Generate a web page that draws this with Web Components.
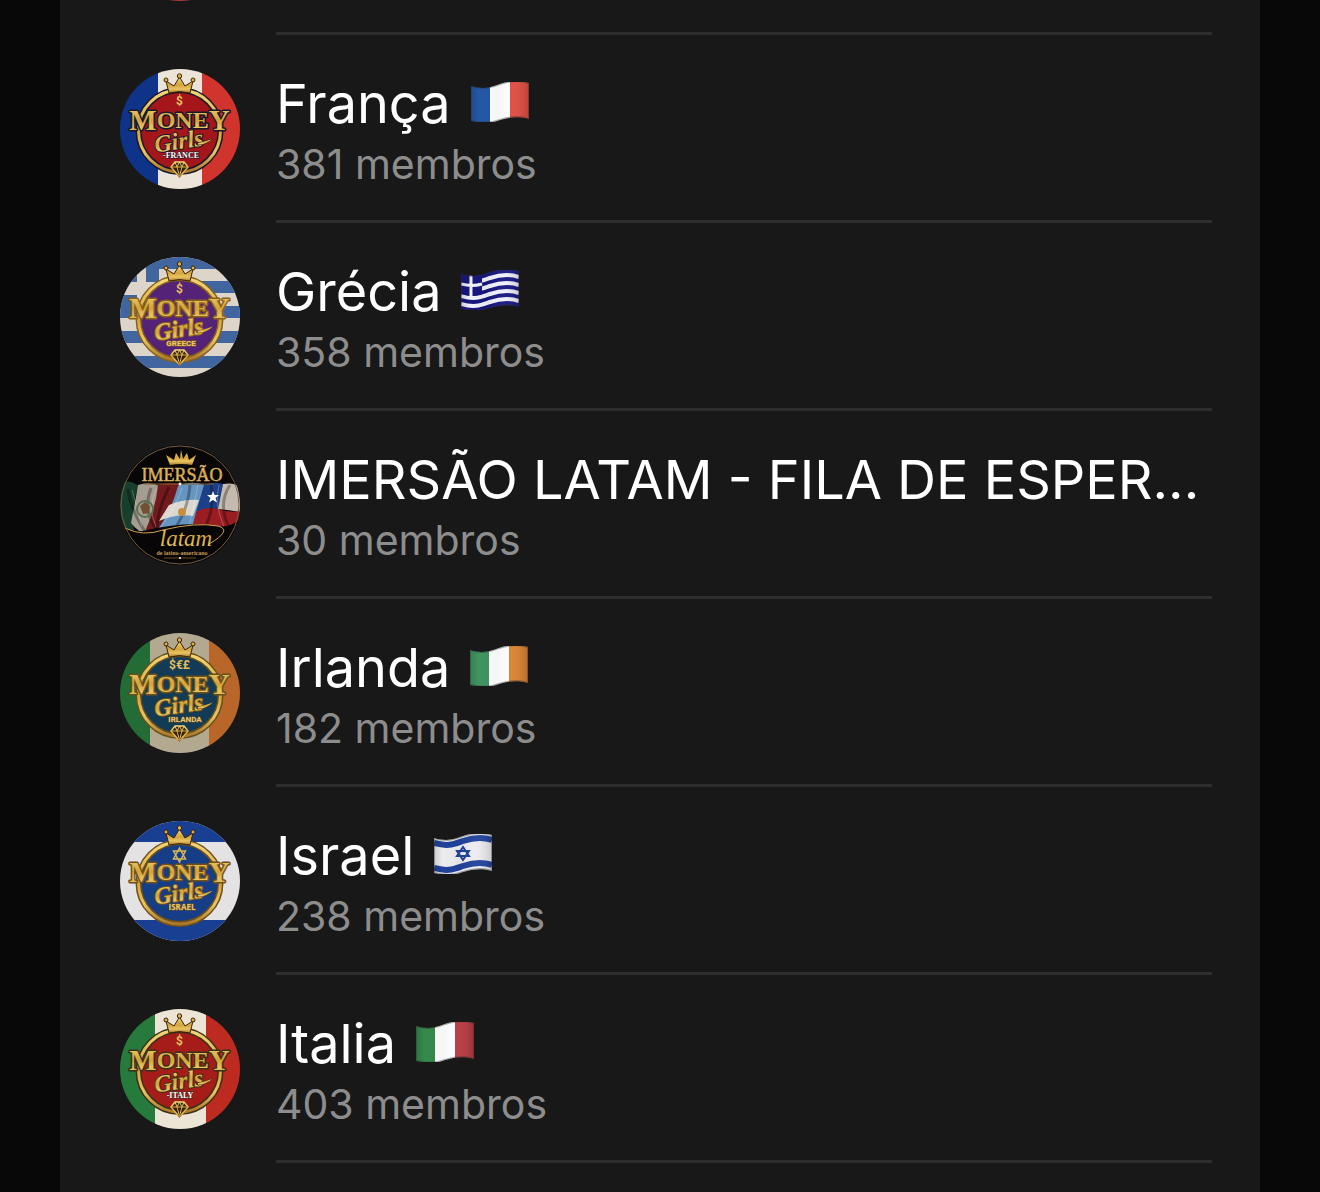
<!DOCTYPE html>
<html lang="pt-BR">
<head>
<meta charset="utf-8">
<meta name="viewport" content="width=device-width, initial-scale=1">
<title>Grupos</title>
<style>
    body {
        margin: 0;
        background-color: #080808;
        font-family: Inter, "Liberation Sans", sans-serif;
    }
</style>
</head>
<body>
<group-list>
    <group-row clipped><group-avatar slot="avatar" kind="previous"></group-avatar></group-row>
    <group-row>
        <group-avatar slot="avatar" kind="france"></group-avatar>
        França
        <flag-icon slot="flag" country="fr"></flag-icon>
        <span slot="members">381 membros</span>
    </group-row>
    <group-row>
        <group-avatar slot="avatar" kind="greece"></group-avatar>
        Grécia
        <flag-icon slot="flag" country="gr"></flag-icon>
        <span slot="members">358 membros</span>
    </group-row>
    <group-row>
        <group-avatar slot="avatar" kind="latam"></group-avatar>
        IMERSÃO LATAM - FILA DE ESPER...
        <span slot="members">30 membros</span>
    </group-row>
    <group-row>
        <group-avatar slot="avatar" kind="ireland"></group-avatar>
        Irlanda
        <flag-icon slot="flag" country="ie"></flag-icon>
        <span slot="members">182 membros</span>
    </group-row>
    <group-row>
        <group-avatar slot="avatar" kind="israel"></group-avatar>
        Israel
        <flag-icon slot="flag" country="il"></flag-icon>
        <span slot="members">238 membros</span>
    </group-row>
    <group-row>
        <group-avatar slot="avatar" kind="italy"></group-avatar>
        Italia
        <flag-icon slot="flag" country="it"></flag-icon>
        <span slot="members">403 membros</span>
    </group-row>
</group-list>

<script>
// ---- waving flags -------------------------------------------------

const wave = 'c14 4 20 1 29 -2 s20 -4 29 -1';
const outline = `M0 4 ${wave} V37 c-9 -3 -20 -2 -29 1 s-15 4 -29 1z`;
const band = (y, color, width) =>
    `<path d="M0 ${y} ${wave}" fill="none" stroke="${color}" stroke-width="${width}"/>`;
const tricolor = (a, b, c) => `
    <path fill="${a}" d="M0 0h19v40H0z"/>
    <path fill="${b}" d="M19 0h20v40H19z"/>
    <path fill="${c}" d="M39 0h19v40H39z"/>`;

const flags = {
    fr: tricolor('#2458a6', '#fff', '#e04a3f'),
    ie: tricolor('#3f9560', '#fff', '#d9812f'),
    it: tricolor('#358a4b', '#fff', '#b8383f'),
    gr: `
        <path fill="#17177f" d="M0 0h58v40H0z"/>
        ${band(10, '#f1f1fc', 4)}${band(18, '#f1f1fc', 4)}
        ${band(26, '#f1f1fc', 4)}${band(34, '#f1f1fc', 4)}
        <path fill="#17177f" d="M0 0h21v24q-10 4-21 0z"/>
        <path fill="none" stroke="#f1f1fc" stroke-width="3" d="M10 4v22M0 14q11 3 21 0"/>`,
    il: `
        <path fill="#ededf0" d="M0 0h58v40H0z"/>
        ${band(9, '#20429b', 6)}${band(34, '#20429b', 6)}
        <path fill="none" stroke="#20429b" stroke-width="2" d="M29 13l6 9H23zM29 26l-6-9h12z"/>`
};

class FlagIcon extends HTMLElement {
    constructor() {
        super();
        this.shadow = this.attachShadow({mode: 'open'});
    }
    connectedCallback() {
        this.shadow.innerHTML = `
            <style>
                :host { display: block; flex: none; padding-bottom: 4px; }
                svg { display: block; width: 58px; height: 40px; }
            </style>
            <svg viewBox="0 0 58 40" aria-hidden="true">
                <defs>
                    <clipPath id="shape"><path d="${outline}"/></clipPath>
                    <linearGradient id="shade">
                        <stop offset="0" stop-color="#000" stop-opacity=".15"/>
                        <stop offset=".15" stop-color="#000" stop-opacity="0"/>
                        <stop offset=".45" stop-color="#000" stop-opacity=".04"/>
                        <stop offset=".7" stop-color="#fff" stop-opacity=".04"/>
                        <stop offset="1" stop-color="#000" stop-opacity=".15"/>
                    </linearGradient>
                </defs>
                <g clip-path="url(#shape)">
                    ${flags[this.getAttribute('country')]}
                    <path fill="url(#shade)" d="M0 0h58v40H0z"/>
                    <path d="${outline}" fill="none" stroke="#333" stroke-opacity=".4" stroke-width="2"/>
                </g>
            </svg>`;
    }
}
customElements.define('flag-icon', FlagIcon);

// ---- round group pictures -----------------------------------------

const vertical = (a, b, c, x1, x2) => `
    <path fill="${a}" d="M0 0h${x1}v120H0z"/>
    <path fill="${b}" d="M${x1} 0H${x2}v120H${x1}z"/>
    <path fill="${c}" d="M${x2} 0H120v120H${x2}z"/>`;

const crown = `
    <g stroke="#3a2408" stroke-width="1">
        <path fill="url(#gold)" d="M49 24L46 12l8 5 5.500-9 5.500 9 8-5-3 12q-10-3-21 0z"/>
        <circle fill="url(#gold)" cx="46" cy="11" r="2"/>
        <circle fill="url(#gold)" cx="59.500" cy="7" r="2.200"/>
        <circle fill="url(#gold)" cx="73" cy="11" r="2"/>
    </g>`;

const diamond = `
    <g stroke="url(#gold)" stroke-width="1.500" fill="#33200c" stroke-linejoin="round">
        <path d="M55 93h9l4 5-8.500 10-8.500-10z"/>
        <path d="M51 98h17M55 93l2 5 2.500 9 2.500-9 2-5M57 98l2.500-5 2.500 5" fill="none" stroke-width="1"/>
    </g>`;

const star = '<path fill="none" stroke="#d9b659" stroke-width="1.500" d="M59.500 27l6 11h-12zM59.500 41l-6-11h12z"/>';

// the crest that all the country groups share
const crest = ({back, core, edge, mark, label, labelFont, labelColor, labelX, gem}) => `
    ${back}
    <circle cx="59.500" cy="62" r="41" fill="${core}" stroke="${edge}" stroke-width="6"/>
    <circle cx="59.500" cy="62" r="41" fill="none" stroke="url(#gold)" stroke-width="3"/>
    ${crown}
    ${mark === 'star' ? star : `<text x="59.500" y="36" font-size="12" font-family="Roboto" font-weight="700" text-anchor="middle" fill="#e4bd5a">${mark}</text>`}
    <g fill="url(#gold)" stroke="${edge}" paint-order="stroke" stroke-linejoin="round">
        <text x="59.500" y="61" font-size="29" font-family="Liberation Serif" font-weight="700" text-anchor="middle" stroke-width="3">M<tspan font-size="24" dy="-2">ONE</tspan><tspan dy="2">Y</tspan></text>
        <text x="59" y="80" font-size="24" font-family="Liberation Serif" font-style="italic" font-weight="700" text-anchor="middle" stroke-width="2" transform="rotate(-8 59 74)">Girls</text>
        <path d="M78 74q9-2 14-4-5 5-14 6z" stroke-width="1"/>
    </g>
    <text x="${labelX}" y="89" font-size="8" font-family="${labelFont}" font-weight="700" text-anchor="middle" fill="${labelColor}" stroke="${edge}" stroke-width="1" paint-order="stroke">${label}</text>
    ${gem ? diamond : ''}`;

const avatars = {
    previous: '<path fill="#a33a3a" d="M0 0h120v120H0z"/>',
    france: crest({
        back: vertical('#10338a', '#ece4d8', '#d0342c', 38, 82),
        core: '#a5161b', edge: '#17182c', mark: '$', label: '-FRANCE', labelFont: 'Liberation Serif', labelColor: '#fff', labelX: 61, gem: true
    }),
    greece: crest({
        back: `
            <path fill="#ddd5c9" d="M0 0h120v120H0z"/>
            <path fill="#41659f" d="M0 0h120v12H0zM30 24h90v12H30zM0 49h120v12H0zM0 74h120v12H0zM0 99h120v12H0z"/>
            <path fill="#41659f" d="M0 0h39v49H0z"/>
            <path fill="#ddd5c9" d="M0 25h39v13H0zM17 0h9v49H17z"/>`,
        core: '#542277', edge: '#896019', mark: '$', label: 'GREECE', labelFont: 'Roboto', labelColor: '#edc86b', labelX: 61, gem: true
    }),
    ireland: crest({
        back: vertical('#246c35', '#b3a991', '#b9662a', 30, 89),
        core: '#143b55', edge: '#675019', mark: '$€£', label: 'IRLANDA', labelFont: 'Roboto', labelColor: '#e1c57b', labelX: 65, gem: true
    }),
    israel: crest({
        back: `
            <path fill="#e5e2e4" d="M0 0h120v120H0z"/>
            <path fill="#193f92" d="M0 0h120v21H0zM0 99h120v21H0z"/>`,
        core: '#163e86', edge: '#705018', mark: 'star', label: 'ISRAEL', labelFont: 'Open Sans', labelColor: '#ebc765', labelX: 62, gem: false
    }),
    italy: crest({
        back: vertical('#267a3c', '#ece4d5', '#bd2b20', 35, 86),
        core: '#a61c19', edge: '#3d3019', mark: '$', label: '-ITALY', labelFont: 'Liberation Serif', labelColor: '#fff', labelX: 60, gem: true
    }),
    latam: `
        <path fill="#080606" d="M0 0h120v120H0z"/>
        <path fill="#173f2c" d="M0 38q10-4 18 3-7 22-4 45L0 84z"/>
        <path fill="#a59c92" d="M18 40q11-4 22 1-3 23-10 47-10 2-19-10 4-20 7-38z"/>
        <path fill="#721a1e" d="M38 40q12-4 25 0-10 27-28 51-7-2-9-7 10-22 12-44z"/>
        <path fill="#6595c0" d="M58 41q13-6 27-1-4 25-14 46-16-5-36 2 16-20 23-47z"/>
        <path fill="#dcd8d1" d="M49 60q14-6 30-5l-6 16q-16-3-34 5z"/>
        <path fill="#1d3f87" d="M84 40q9-4 19-1l-5 25q-9-2-22 3z"/>
        <path fill="#c4bab0" d="M103 39q11-2 17 3v25q-11-2-22-3z"/>
        <path fill="#9a1d21" d="M76 67q10-6 22-3 12 4 22 2v20q-26 1-47-7z"/>
        <path fill="none" stroke="#000" stroke-opacity=".3" stroke-width="3" d="M8 44q2 20 18 44M31 43q-9 24 6 42M49 42q-13 25-12 48M70 40q-2 26-17 46M91 39q4 24-6 44M110 40q-13 20 0 44"/>
        <path fill="none" stroke="#fff" stroke-opacity=".25" stroke-width="1" d="M12 45q5 17 10 37M37 43q-10 18-1 39M62 43q-8 23-23 41M78 40q-4 19-9 42M99 40q-5 19 5 42"/>
        <circle cx="25" cy="64" r="8" fill="none" stroke="#5a7150" stroke-width="2"/>
        <path fill="#725032" d="M20 61l5-4 5 4-1 7-6 1z"/>
        <circle cx="62" cy="67" r="4" fill="#c5903d"/>
        <path fill="#fff" d="M93 46l1.500 4h4.500l-3.500 3 1.500 4.500-4-2.500-4 2.500 1.500-4.500-3.500-3h4.500z"/>
        <path fill="#080606" d="M0 80q13 9 27 5 39-9 70-4 13 2 23-7v46H0z"/>
        <path fill="none" stroke="#d2a052" stroke-width="1" d="M5 83q18 9 38 2 33-8 55-4 15 4-9 18"/>
        <path fill="url(#gold)" d="M50 20L46 10l8 5 2-7 4 6 1-9 2 9 4-6 2 7 7-5-4 10q-11-2-22 0z"/>
        <text x="62" y="36" font-size="18" font-family="Liberation Serif" text-anchor="middle" fill="url(#gold)" stroke="#d6aa60" stroke-width=".5">IMERSÃO</text>
        <path stroke="#86632e" d="M24 39h70"/>
        <circle cx="60" cy="39" r="1.500" fill="#fff"/>
        <text x="66" y="101" font-size="23" font-family="Liberation Serif" font-style="italic" text-anchor="middle" fill="url(#gold)">latam</text>
        <text x="62" y="110" font-size="6" font-family="Liberation Serif" font-weight="700" text-anchor="middle" fill="#c49a58">de latino-americano</text>
        <path stroke="#66491f" d="M44 113h32"/>
        <circle cx="60" cy="113" r="1" fill="#fff"/>
        <circle cx="60" cy="60" r="59" fill="none" stroke="#766047" stroke-width="1"/>`
};

class GroupAvatar extends HTMLElement {
    constructor() {
        super();
        this.shadow = this.attachShadow({mode: 'open'});
    }
    connectedCallback() {
        this.shadow.innerHTML = `
            <style>
                :host {
                    display: block;
                    flex: none;
                    width: 120px;
                    height: 120px;
                    border-radius: 50%;
                    overflow: hidden;
                }
                svg { display: block; width: 100%; height: 100%; }
            </style>
            <svg viewBox="0 0 120 120" aria-hidden="true">
                <defs>
                    <linearGradient id="gold" x1="0" y1="0" x2="0" y2="1">
                        <stop offset="0" stop-color="#f3d578"/>
                        <stop offset=".5" stop-color="#d4a33b"/>
                        <stop offset=".75" stop-color="#e9c564"/>
                        <stop offset="1" stop-color="#a97728"/>
                    </linearGradient>
                </defs>
                ${avatars[this.getAttribute('kind')]}
            </svg>`;
    }
}
customElements.define('group-avatar', GroupAvatar);

// ---- one row ------------------------------------------------------

const rowTemplate = document.createElement('template');
rowTemplate.innerHTML = `
<style>
    :host {
        display: flex;
        gap: 36px;
    }
    .avatar {
        padding: 34px 0;
    }
    .body {
        flex: 1;
        min-width: 0;
        padding-top: 34px;
        border-bottom: 3px solid #2e2e2e;
    }
    .title {
        display: flex;
        align-items: center;
        gap: 20px;
        color: #fff;
        font-size: 54px;
        line-height: 70px;
    }
    .name {
        overflow: hidden;
        white-space: nowrap;
        text-overflow: ellipsis;
    }
    .members {
        color: #8d8d8d;
        font-size: 41px;
        line-height: 50px;
    }
    /* row that is scrolled away, only its lower edge shows */
    :host([clipped]) {
        height: 35px;
        overflow: hidden;
        align-items: flex-end;
    }
    :host([clipped]) .body {
        padding: 0;
    }
</style>
<div class="avatar"><slot name="avatar"></slot></div>
<div class="body">
    <div class="title"><span class="name"><slot></slot></span><slot name="flag"></slot></div>
    <div class="members"><slot name="members"></slot></div>
</div>
`;

class GroupRow extends HTMLElement {
    constructor() {
        super();
        this.shadow = this.attachShadow({mode: 'open'});
        this.shadow.appendChild(rowTemplate.content.cloneNode(true));
    }
    connectedCallback() {
        this.setAttribute('role', this.hasAttribute('clipped') ? 'presentation' : 'listitem');
    }
}
customElements.define('group-row', GroupRow);

// ---- the list -----------------------------------------------------

class GroupList extends HTMLElement {
    constructor() {
        super();
        this.shadow = this.attachShadow({mode: 'open'});
        this.shadow.innerHTML = `
            <style>
                :host {
                    display: block;
                    box-sizing: border-box;
                    min-height: 100vh;
                    margin: 0 60px;
                    padding: 0 48px 0 60px;
                    background-color: #181818;
                }
            </style>
            <slot></slot>`;
    }
    connectedCallback() {
        this.setAttribute('role', 'list');
    }
}
customElements.define('group-list', GroupList);
</script>
</body>
</html>
